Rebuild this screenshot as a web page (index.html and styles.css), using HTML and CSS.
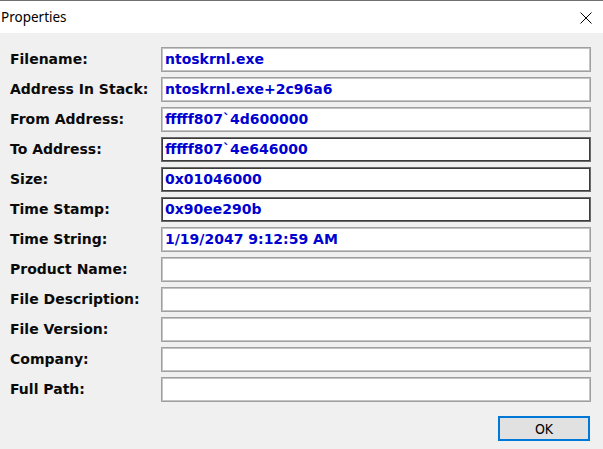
FILE: index.html
```html
<!DOCTYPE html>
<html>
<head>
<meta charset="utf-8">
<link rel="stylesheet" href="styles.css">
</head>
<body>
<div class="window">
  <div class="titlebar">
    <span class="title">Properties</span>
    <svg class="close" width="12" height="12" viewBox="0 0 12 12"><path d="M0.5 0.5 L11.5 11.5 M11.5 0.5 L0.5 11.5" stroke="#000" stroke-width="1" fill="none"/></svg>
  </div>
  <div class="content">
    <div class="grid">
      <div class="label">Filename:</div><div class="field">ntoskrnl.exe</div>
      <div class="label">Address In Stack:</div><div class="field">ntoskrnl.exe+2c96a6</div>
      <div class="label">From Address:</div><div class="field">fffff807`4d600000</div>
      <div class="label">To Address:</div><div class="field dark">fffff807`4e646000</div>
      <div class="label">Size:</div><div class="field dark">0x01046000</div>
      <div class="label">Time Stamp:</div><div class="field dark">0x90ee290b</div>
      <div class="label">Time String:</div><div class="field">1/19/2047 9:12:59 AM</div>
      <div class="label">Product Name:</div><div class="field"></div>
      <div class="label">File Description:</div><div class="field"></div>
      <div class="label">File Version:</div><div class="field"></div>
      <div class="label">Company:</div><div class="field"></div>
      <div class="label">Full Path:</div><div class="field"></div>
    </div>
    <div class="buttons">
      <button class="ok">OK</button>
    </div>
  </div>
</div>
</body>
</html>
```
FILE: styles.css
```css
html, body {
  margin: 0;
  padding: 0;
  background: #f0f0f0;
}
.window {
  width: 603px;
  height: 449px;
  border-top: 1px solid #707070;
  box-sizing: border-box;
  background: #f0f0f0;
}
.titlebar {
  height: 32px;
  background: #ffffff;
  display: flex;
  align-items: center;
  justify-content: space-between;
  padding: 0 11px 0 1px;
}
.title {
  font-family: "Noto Sans", "Open Sans", sans-serif;
  font-size: 13.5px;
  color: #000;
  margin-top: -1px;
}
.close {
  display: block;
  margin-top: 1px;
}
.content {
  padding: 14px 12px 0 10px;
}
.grid {
  display: grid;
  grid-template-columns: 151px 430px;
  row-gap: 5px;
  align-items: center;
}
.label {
  font-family: "DejaVu Sans", sans-serif;
  font-weight: bold;
  font-size: 14px;
  color: #0a0a0a;
  line-height: 25px;
}
.field {
  height: 25px;
  box-sizing: border-box;
  background: #fff;
  border: 1px solid #a0a0a0;
  box-shadow: inset 0 0 0 1px #c4c4c4;
  padding: 0 3px;
  font-family: "DejaVu Sans", sans-serif;
  font-weight: bold;
  font-size: 14px;
  color: #0000d0;
  line-height: 23px;
  white-space: nowrap;
}
.field.dark {
  border-color: #6a6a6a;
  box-shadow: inset 0 0 0 1px #3c3c3c;
}
.buttons {
  display: flex;
  justify-content: flex-end;
  margin-top: 14px;
  padding-right: 1px;
}
.ok {
  width: 92px;
  height: 25px;
  box-sizing: border-box;
  background: #e1e1e1;
  border: 2px solid #0078d7;
  font-family: "DejaVu Sans", sans-serif;
  font-stretch: condensed;
  font-size: 14px;
  color: #000;
  padding: 0;
  margin: 0;
}
```
